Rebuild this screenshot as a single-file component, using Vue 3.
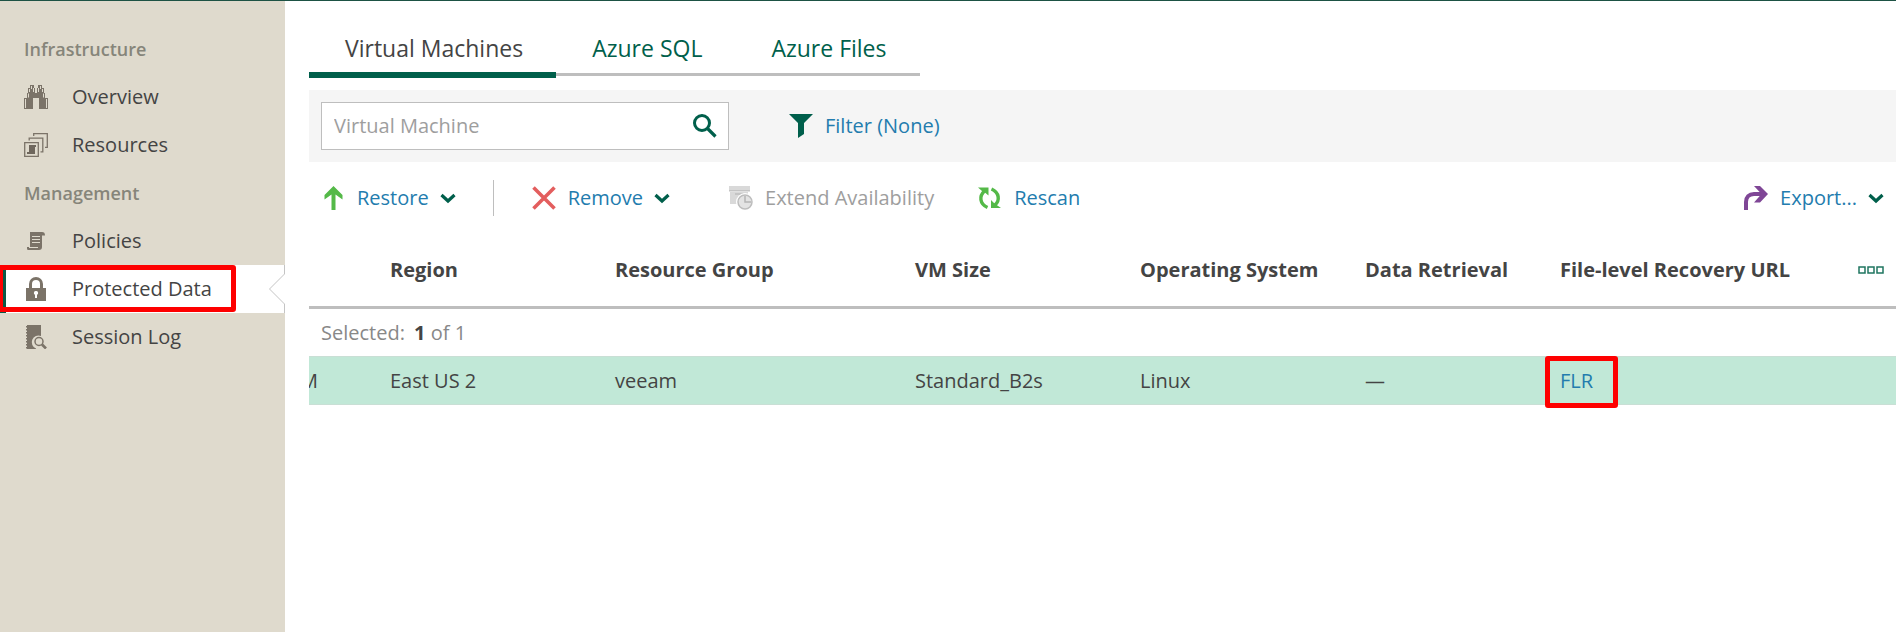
<script setup>
import { ref } from 'vue'

const search = ref('')
const groups = [
  {
    title: 'Infrastructure',
    items: [
      { name: 'Overview', icon: 'binoculars' },
      { name: 'Resources', icon: 'resources' },
    ],
  },
  {
    title: 'Management',
    items: [
      { name: 'Policies', icon: 'policy' },
      { name: 'Protected Data', icon: 'lock', active: true },
      { name: 'Session Log', icon: 'log' },
    ],
  },
]
const tabs = ['Virtual Machines', 'Azure SQL', 'Azure Files']
</script>

<template>
  <div class="app">
    <nav class="sidebar" aria-label="Main">
      <template v-for="group in groups" :key="group.title">
        <h2 class="group">{{ group.title }}</h2>
        <a v-for="item in group.items" :key="item.name" href="#" class="nav" :class="{ active: item.active }">
          <svg class="icon" viewBox="0 0 24 24" aria-hidden="true">
            <g v-if="item.icon === 'binoculars'">
              <path fill="#7b7368" d="M6 0h4v3h1v5h2V3h1V0h4v3h2v5h1v5h3v11h-9V13H9v11H0V13h3V8h1V3h2z" />
              <path fill="none" stroke="#dfdacd" d="M7.5 1v3M16.500 1v3M5.500 4v3M18.500 4v3M9.500 3v4M14.500 3v4M4.500 8.500v4M19.500 8.500v4M1.500 14v9M22.500 14v9" />
            </g>
            <g v-else-if="item.icon === 'resources'">
              <path fill="none" stroke="#7b7368" stroke-width="1.300" d="M9.700 3V.7h13.600v13.600H21M5.200 7.500V5.200h13.600v13.600h-2.300M.7 9.700h13.600v13.600H.7z" />
              <path fill="#6f675d" d="M5 12h7v2h-1v7H3v-2h2z" />
            </g>
            <g v-else-if="item.icon === 'policy'">
              <path fill="#7b7368" d="M6 3h12c2 0 3 1 3 3.500h-3V18c0 2-1 3-3 3H4c-1 0-1-1-1-3h3z" />
              <path stroke="#dfdacd" d="M8 7.500h8M8 10.500h8M8 13.500h8M5 18.500h9" />
            </g>
            <g v-else-if="item.icon === 'lock'">
              <path fill="none" stroke="#7b7368" stroke-width="3" d="M6.500 12V7a5.500 5.500 0 0 1 11 0v5" />
              <path fill="#7b7368" d="M2 11h20v13H2z" />
              <path fill="#fff" d="M12 14a2 2 0 0 1 1 3.800V21h-2v-3.200a2 2 0 0 1 1-3.800z" />
            </g>
            <g v-else>
              <path fill="#7b7368" d="M3 0h14v11a6.500 6.500 0 0 0-5 12.500V24H3z" />
              <path stroke="#7b7368" stroke-width="3" stroke-dasharray="1.500 1.500" d="M3.500 1v23" />
              <circle cx="15" cy="16.500" r="4" fill="none" stroke="#7b7368" stroke-width="1.500" />
              <path stroke="#7b7368" stroke-width="2.600" d="m18 19.500 4 4" />
            </g>
          </svg>
          <span>{{ item.name }}</span>
          <svg v-if="item.active" class="notch" viewBox="0 0 17 48" aria-hidden="true">
            <path fill="#fff" stroke="#c4c4c4" d="M16.500 0v9L1.500 24l15 15v9" />
          </svg>
          <span v-if="item.active" class="mark nav-mark"></span>
        </a>
      </template>
    </nav>

    <main class="main">
      <div class="tabs" role="tablist">
        <button v-for="(tab, i) in tabs" :key="tab" type="button" role="tab" class="tab" :aria-selected="i === 0" :class="{ current: i === 0 }">{{ tab }}</button>
      </div>

      <div class="filters">
        <div class="search">
          <input v-model="search" type="text" placeholder="Virtual Machine" aria-label="Virtual Machine" />
          <button type="button" class="plain" aria-label="Search">
            <svg class="icon" viewBox="0 0 24 24" aria-hidden="true">
              <circle cx="9" cy="9" r="7.500" fill="none" stroke="#005f4b" stroke-width="3" />
              <path stroke="#005f4b" stroke-width="3.200" d="m14 14 8.500 8.500" />
            </svg>
          </button>
        </div>
        <button type="button" class="plain action">
          <svg class="icon" viewBox="0 0 24 24" aria-hidden="true"><path fill="#005f4b" d="M0 0h24l-9 9v11l-6 4V9z" /></svg>
          Filter (None)
        </button>
      </div>

      <div class="toolbar">
        <button type="button" class="plain action">
          <svg class="icon" viewBox="0 0 24 24" aria-hidden="true"><path fill="#54b948" d="m12.500 0 9 9v4.500l-7-5V24h-4V8.500l-7 5V9z" /></svg>
          Restore
          <svg class="chevron" viewBox="0 0 14 9" aria-hidden="true"><path fill="none" stroke="#005f4b" stroke-width="3.200" d="m0.500 1 6.500 6 6.500-6" /></svg>
        </button>
        <span class="divider"></span>
        <button type="button" class="plain action remove">
          <svg class="icon" viewBox="0 0 24 24" aria-hidden="true"><path stroke="#e35e5e" stroke-width="3.600" d="m1.500 1.500 21 21m0-21-21 21" /></svg>
          Remove
          <svg class="chevron" viewBox="0 0 14 9" aria-hidden="true"><path fill="none" stroke="#005f4b" stroke-width="3.200" d="m0.500 1 6.500 6 6.500-6" /></svg>
        </button>
        <button type="button" class="plain action extend" disabled>
          <svg class="icon" viewBox="0 0 24 24" aria-hidden="true">
            <path fill="#d9d9d9" d="M0 0h21v5H0zM1 6h18v4l-9 8H1z" />
            <path fill="#c4c4c4" d="M0 4h21v1.500H0zM6 7h8v2H6z" />
            <circle cx="16" cy="16" r="9" fill="#fff" />
            <circle cx="16" cy="16" r="7" fill="#e3e3e3" stroke="#bdbdbd" stroke-width="1.500" />
            <path fill="none" stroke="#b5b5b5" stroke-width="1.500" d="M16 10v6h6" />
          </svg>
          Extend Availability
        </button>
        <button type="button" class="plain action rescan">
          <svg class="icon" viewBox="0 0 24 24" aria-hidden="true">
            <path fill="none" stroke="#54b948" stroke-width="3.400" d="M9.500 21.500C1.500 18 1 10 6.500 5M13.500 3c8 3.500 8.500 11.500 3.500 16" />
            <path fill="#54b948" d="M0 1.500h10.500v8L7.500 7 4 5zM13 14l3.500 3.500L23 22H13z" />
          </svg>
          Rescan
        </button>
        <button type="button" class="plain action export">
          <svg class="icon" viewBox="0 0 24 24" aria-hidden="true">
            <path fill="none" stroke="#7f4696" stroke-width="4" d="M2 24v-8c0-5 3-8 8-8h10" />
            <path fill="#7f4696" d="M10 0h6l8 8-8 8.500h-6L17.500 8z" />
          </svg>
          Export...
          <svg class="chevron" viewBox="0 0 14 9" aria-hidden="true"><path fill="none" stroke="#005f4b" stroke-width="3.200" d="m0.500 1 6.500 6 6.500-6" /></svg>
        </button>
      </div>

      <table>
        <colgroup>
          <col class="c-name" /><col class="c-md" /><col class="c-lg" /><col class="c-md" /><col class="c-md" /><col class="c-sm" /><col />
        </colgroup>
        <thead>
          <tr>
            <td></td>
            <th scope="col">Region</th>
            <th scope="col">Resource Group</th>
            <th scope="col">VM Size</th>
            <th scope="col">Operating System</th>
            <th scope="col">Data Retrieval</th>
            <th scope="col">
              <div class="last">
                File-level Recovery URL
                <button type="button" class="plain" aria-label="Choose columns">
                  <svg class="columns" viewBox="0 0 26 8" aria-hidden="true"><path fill="none" stroke="#1f7560" stroke-width="1.500" d="M1 1h6v6H1zm9 0h6v6h-6zm9 0h6v6h-6z" /></svg>
                </button>
              </div>
            </th>
          </tr>
        </thead>
        <tbody>
          <tr class="selected">
            <td colspan="7">Selected: <b>1</b> of 1</td>
          </tr>
          <tr class="row">
            <td class="clipped"><span>VM</span></td>
            <td>East US 2</td>
            <td>veeam</td>
            <td>Standard_B2s</td>
            <td>Linux</td>
            <td>—</td>
            <td class="url"><a href="#">FLR</a><span class="mark url-mark"></span></td>
          </tr>
        </tbody>
      </table>
    </main>
  </div>
</template>

<style>
body {
  margin: 0;
}
</style>

<style scoped>
.app {
  display: flex;
  min-height: 100vh;
  box-sizing: border-box;
  border-top: 1px solid #1d5244;
  background: #fff;
  color: #444;
  font-family: "Open Sans", sans-serif;
  font-size: 20px;
  line-height: 28px;
}
button,
input {
  font: inherit;
}
.icon {
  flex: none;
  display: block;
  width: 24px;
  height: 24px;
}
.sidebar {
  flex: none;
  box-sizing: border-box;
  width: 285px;
  padding-top: 24px;
  background: #dfdacd;
}
.group {
  margin: 0;
  padding-left: 24px;
  color: #86857a;
  font-size: 18px;
  font-weight: 600;
  line-height: 48px;
}
.nav {
  position: relative;
  display: flex;
  align-items: center;
  gap: 24px;
  height: 48px;
  padding-left: 24px;
  color: #444;
  text-decoration: none;
}
.nav.active {
  padding-left: 18px;
  border-left: 6px solid #0b5947;
  background: #fff;
}
.notch {
  width: 17px;
  height: 48px;
  margin-left: auto;
}
.mark {
  position: absolute;
  box-sizing: border-box;
  border: 5px solid #fe0000;
  border-radius: 3px;
  pointer-events: none;
}
.nav-mark {
  top: 0;
  left: -8px;
  width: 238px;
  height: 47px;
}
.main {
  flex: 1;
  min-width: 0;
  padding-left: 24px;
}
.tabs {
  display: flex;
  align-items: flex-start;
  height: 77px;
  margin-bottom: 12px;
}
.tab {
  box-sizing: border-box;
  height: 75px;
  padding: 22px 33px 0 36px;
  border: 0;
  border-bottom: 3px solid #bebebe;
  background: none;
  color: #005f4b;
  font-size: 23px;
  line-height: 50px;
}
.tab.current {
  height: 77px;
  border-bottom: 6px solid #005f4b;
  color: #444;
}
.filters {
  display: flex;
  align-items: center;
  gap: 60px;
  padding: 12px;
  background: #f5f5f5;
}
.search {
  display: flex;
  align-items: center;
  box-sizing: border-box;
  width: 408px;
  height: 48px;
  padding: 0 11px 0 12px;
  border: 1px solid #bebebe;
  background: #fff;
}
.search input {
  flex: 1;
  min-width: 0;
  padding: 0;
  border: 0;
  outline: 0;
  background: none;
  color: #444;
}
.search input::placeholder {
  color: #9e9e9e;
  opacity: 1;
}
.plain {
  padding: 0;
  border: 0;
  background: none;
  cursor: pointer;
}
.action {
  display: flex;
  align-items: center;
  gap: 12px;
  color: #237cae;
  white-space: nowrap;
}
.action:disabled {
  color: #9e9e9e;
}
.toolbar {
  display: flex;
  align-items: center;
  height: 72px;
  padding: 0 13px 0 12px;
}
.chevron {
  overflow: visible;
  width: 14px;
  height: 9px;
}
.divider {
  width: 1px;
  height: 36px;
  margin: 0 38px;
  background: #bebebe;
}
.extend {
  margin-left: 60px;
}
.rescan {
  margin-left: 44px;
}
.export {
  margin-left: auto;
}
table {
  width: 100%;
  table-layout: fixed;
  border-spacing: 0;
}
.c-name {
  width: 69px;
}
.c-sm {
  width: 195px;
}
.c-md {
  width: 225px;
}
.c-lg {
  width: 300px;
}
th,
td {
  box-sizing: border-box;
  padding: 0 12px;
  text-align: left;
  white-space: nowrap;
}
thead th,
thead td {
  height: 75px;
  border-bottom: 3px solid #bebebe;
  font-weight: 700;
}
.last {
  display: flex;
  align-items: center;
  justify-content: space-between;
}
.columns {
  display: block;
  width: 26px;
  height: 8px;
}
.selected td {
  height: 47px;
  color: #888;
}
.selected b {
  margin-left: 4px;
  color: #444;
}
.row td {
  height: 49px;
  border-top: 1px solid #c9dfd5;
  border-bottom: 1px solid #c9dfd5;
  background: #c1e8d7;
}
.row .clipped {
  padding: 0;
}
.clipped span {
  display: flex;
  justify-content: flex-end;
  width: 9px;
  overflow: hidden;
}
.row .url {
  position: relative;
}
.url a {
  color: #237cae;
  text-decoration: none;
}
.url-mark {
  top: -1px;
  left: -3px;
  width: 73px;
  height: 52px;
}
</style>
